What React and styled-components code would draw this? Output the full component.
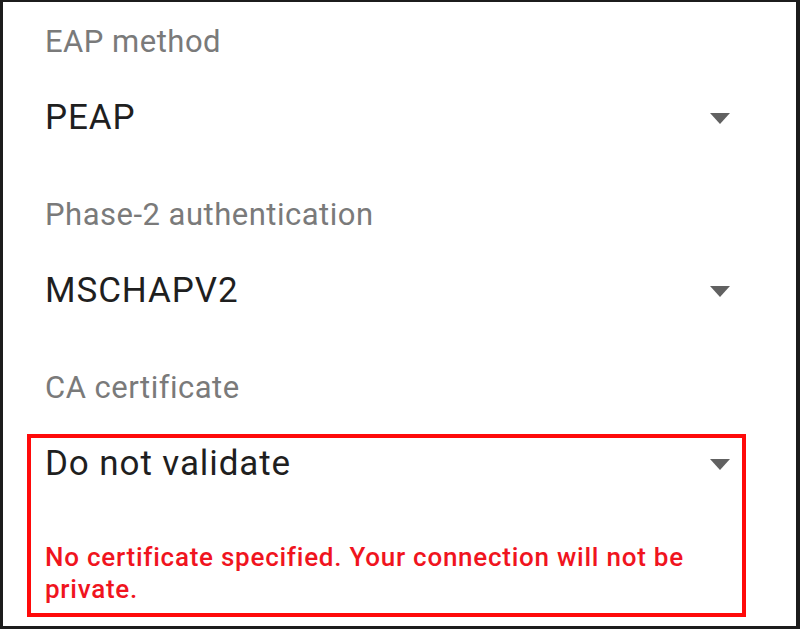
import React from 'react';
import styled, { createGlobalStyle } from 'styled-components';

const GlobalStyle = createGlobalStyle`
  html, body {
    margin: 0;
    padding: 0;
    background: #ffffff;
  }
  body {
    font-family: Roboto, "Noto Sans", "Liberation Sans", sans-serif;
  }
`;

const fields = [
  { label: 'EAP method', value: 'PEAP' },
  { label: 'Phase-2 authentication', value: 'MSCHAPV2' },
];

function DropArrow() {
  return (
    <Arrow viewBox="0 0 20 11" aria-hidden="true">
      <polygon points="0,0 20,0 10,11" />
    </Arrow>
  );
}

function App() {
  return (
    <>
      <GlobalStyle />
      <Frame>
        {fields.map((f) => (
          <Field key={f.label}>
            <Label>{f.label}</Label>
            <SelectRow>
              <Value>{f.value}</Value>
              <DropArrow />
            </SelectRow>
          </Field>
        ))}
        <Field>
          <Label>CA certificate</Label>
          <Highlight>
            <SelectRow>
              <Value>Do not validate</Value>
              <DropArrow />
            </SelectRow>
            <Warning>
              No certificate specified. Your connection will not be private.
            </Warning>
          </Highlight>
        </Field>
      </Frame>
    </>
  );
}

export default App;

const Frame = styled.div`
  width: 800px;
  height: 629px;
  box-sizing: border-box;
  border-style: solid;
  border-color: #1c1c1c;
  border-width: 2px 4px 3px 3px;
  padding: 20px 50px 0 24px;
  display: flex;
  flex-direction: column;
  gap: 55px;
  overflow: hidden;
`;

const Field = styled.div`
  display: flex;
  flex-direction: column;
  gap: 34px;
`;

const Label = styled.div`
  font-size: 31px;
  line-height: 40px;
  letter-spacing: 0.5px;
  color: #7a7a7a;
  padding: 0 16px 0 18px;
  white-space: nowrap;
`;

const SelectRow = styled.div`
  display: flex;
  align-items: center;
  justify-content: space-between;
  padding: 0 16px 0 18px;
`;

const Value = styled.div`
  font-size: 35px;
  line-height: 44px;
  letter-spacing: 0.9px;
  color: #1f1f1f;
  white-space: nowrap;
`;

const Arrow = styled.svg`
  width: 20px;
  height: 11px;
  fill: #616161;
  flex-shrink: 0;
`;

const Highlight = styled.div`
  margin-top: -8px;
  border: 4px solid #ff0a0a;
  padding: 4px 0 8px 0;
  display: flex;
  flex-direction: column;
  gap: 55px;

  ${SelectRow} {
    padding: 0 12px 0 14px;
  }
`;

const Warning = styled.div`
  font-size: 26px;
  font-weight: 500;
  line-height: 32px;
  letter-spacing: 0.75px;
  color: #f0141e;
  padding: 0 40px 0 14px;
`;
